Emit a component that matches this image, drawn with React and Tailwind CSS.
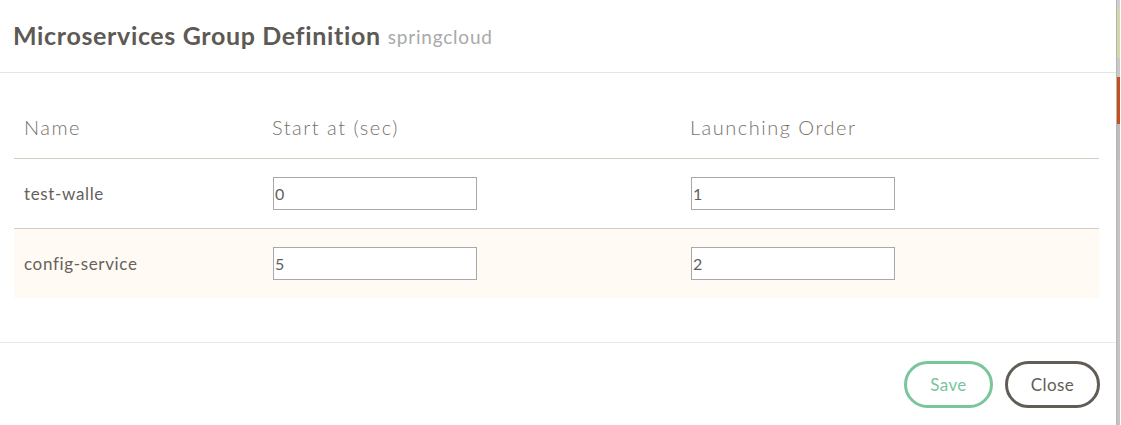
import React from "react";

const rows = [
  { name: "test-walle", start: "0", order: "1", alt: false },
  { name: "config-service", start: "5", order: "2", alt: true },
];

export default function App() {
  return (
    <div
      className="flex w-[1121px] h-[425px] bg-white overflow-hidden"
      style={{ fontFamily: "Lato, 'Noto Sans', sans-serif" }}
    >
      <div className="flex flex-col w-[1117px] h-full bg-white border-r border-[#b5b5b5]">
        <div className="flex items-center h-[73px] px-[13px] border-b border-[#e5e5e5]">
          <span className="text-[25px] font-bold text-[#5d5954] tracking-[0.65px]">
            Microservices Group Definition
          </span>
          <span className="ml-[7px] mt-[3px] text-[19px] text-[#a9a9a9] tracking-[0.8px]">springcloud</span>
        </div>
        <div className="pt-[22px] pb-[44px] pl-[14px] pr-[17px] border-b border-[#e8e8e8]">
          <div className="grid grid-cols-[248px_418px_1fr] h-[64px] items-center border-b border-[#d5cdbf] text-[20px] font-light text-[#77726c] tracking-[1.5px]">
            <div className="pl-[10px]">Name</div>
            <div className="pl-[10px]">Start at (sec)</div>
            <div className="pl-[10px]">Launching Order</div>
          </div>
          {rows.map((r) => (
            <div
              key={r.name}
              className={
                "grid grid-cols-[248px_418px_1fr] items-center text-[17px] text-[#66615c] tracking-[0.65px] " +
                (r.alt ? "h-[69px] bg-[#fffbf4]" : "h-[70px] border-b border-[#d5cdbf]")
              }
            >
              <div className="pl-[10px]">{r.name}</div>
              <div className="pl-[11px]">
                <div className="w-[204px] h-[33px] border border-[#a8a8a8] bg-white flex items-center pl-[1px] text-[16px] text-[#5f5f5f] tracking-normal">
                  {r.start}
                </div>
              </div>
              <div className="pl-[11px]">
                <div className="w-[204px] h-[33px] border border-[#a8a8a8] bg-white flex items-center pl-[1px] text-[16px] text-[#5f5f5f] tracking-normal">
                  {r.order}
                </div>
              </div>
            </div>
          ))}
        </div>
        <div className="flex justify-end gap-[12px] pt-[18px] pr-[16px]">
          <button className="w-[89px] h-[47px] rounded-full border-[3px] border-[#79c59c] text-[#79c59c] text-[17px] tracking-[0.4px] bg-white">
            Save
          </button>
          <button className="w-[95px] h-[47px] rounded-full border-[3px] border-[#625c57] text-[#625c57] text-[17px] tracking-[0.4px] bg-white">
            Close
          </button>
        </div>
      </div>
      <div className="flex flex-col w-[3px] h-full bg-[#c2c2c2]">
        <div className="h-[9px] bg-[#cfcfcf]" />
        <div className="h-[49px] bg-[#d4d7a9]" />
        <div className="h-[19px] bg-[#c8c8c8]" />
        <div className="h-[47px] bg-[#c64f20]" />
        <div className="h-[36px] bg-[#bdbdbd]" />
        <div className="flex-1 bg-[#c4c4c4]" />
      </div>
    </div>
  );
}
